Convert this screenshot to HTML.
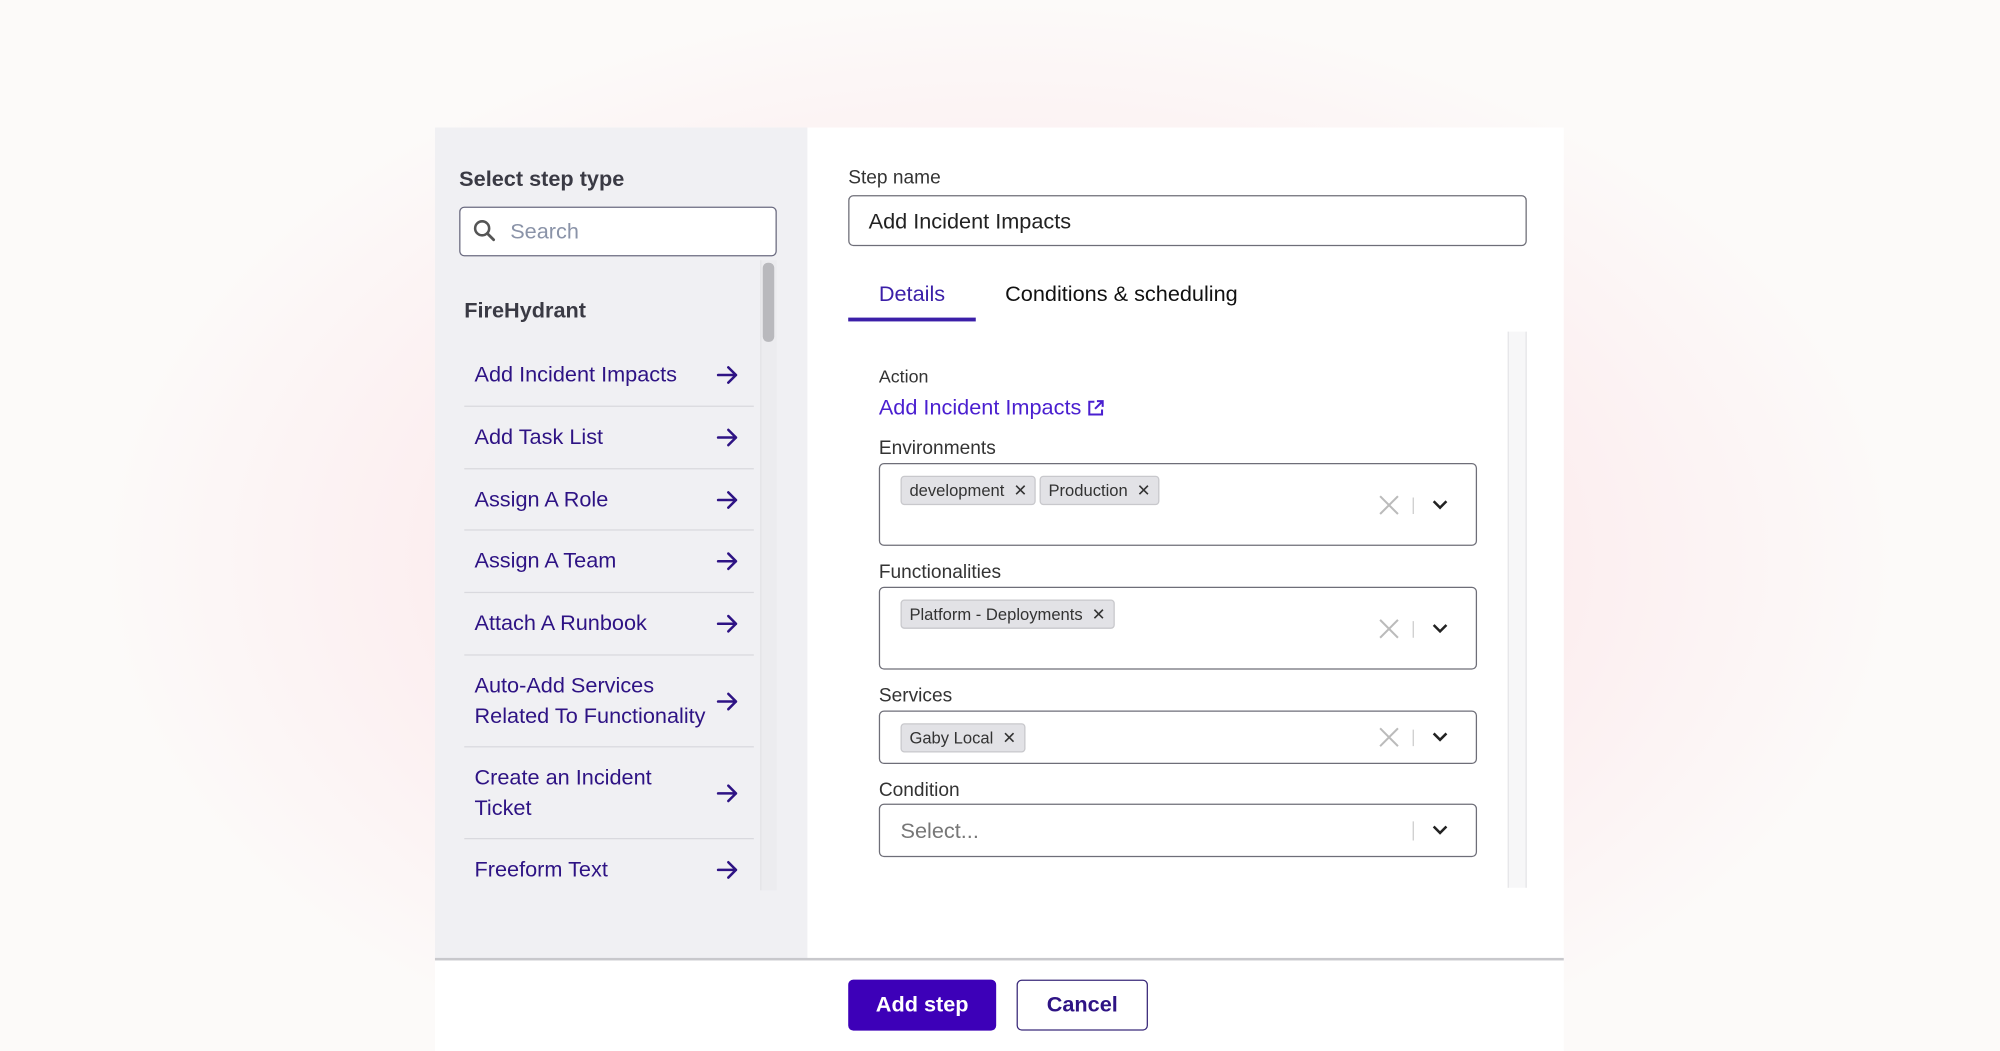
<!DOCTYPE html>
<html><head><meta charset="utf-8"><style>
*{box-sizing:border-box;margin:0;padding:0}
html,body{width:2000px;height:1050px;overflow:hidden;background:#fcfaf9;font-family:"Liberation Sans",sans-serif}
#bg{position:absolute;left:0;top:0;width:2000px;height:1050px;background:radial-gradient(ellipse 900px 560px at 1000px 560px,#fbe3e6 0%,#fcecee 55%,#fcfaf9 100%)}
#w{position:absolute;left:0;top:0;width:1568px;height:824px;transform:scale(1.27551);transform-origin:0 0}
.a{position:absolute}
.modal{left:341px;top:100px;width:885px;height:724px;background:#fff}
.left{left:341px;top:100px;width:292px;height:652px;background:#f0f0f3}
.h{font-weight:bold;font-size:17px;color:#3a3a44}
.item{left:364px;width:227px;border-bottom:1.5px solid #d9d9de;color:#2e1384;font-size:17px;line-height:24px}
.item span{position:absolute;left:8px}
.item svg{position:absolute;right:12px}
.lbl{font-size:15px;color:#333;left:689px}
.box{left:689px;width:469px;border:1.3px solid #6e6e78;border-radius:4px;background:#fff}
.chip{position:absolute;top:9px;height:23px;background:#e2e2e6;border:1px solid #c8c8cc;border-radius:3px;font-size:13px;color:#333;line-height:21px;padding:0 24px 0 6px}
.chip:after{content:"✕";position:absolute;right:6px;top:0;font-size:13px;color:#333}
.ctrl{position:absolute;right:0;width:80px}
</style></head><body><div id="bg"></div>
<div id="w">
<div class="a modal"></div>
<div class="a left"></div>
<div class="a h" style="left:360px;top:131px">Select step type</div>
<div class="a" style="left:360px;top:162px;width:249px;height:39px;border:1.3px solid #6b6b80;border-radius:4px;background:#fff"></div>
<svg class="a" style="left:370px;top:171px" width="20" height="20" viewBox="0 0 20 20"><circle cx="8" cy="8" r="5.5" fill="none" stroke="#555" stroke-width="2"/><path d="M12 12l5 5" stroke="#555" stroke-width="2.2" stroke-linecap="round"/></svg>
<div class="a" style="left:400px;top:172px;font-size:17px;color:#8a93a8">Search</div>
<div class="a" style="left:596px;top:204px;width:13px;height:494px;background:#ececef;border-left:1px solid #e3e3e6"></div>
<div class="a" style="left:598px;top:206px;width:9px;height:62px;background:#b9b9bd;border-radius:4px"></div>
<div class="a h" style="left:364px;top:234px">FireHydrant</div>
<svg width="0" height="0" style="position:absolute"><defs><g id="ar"><path d="M2 9h14M10 3l6 6-6 6" fill="none" stroke="#2e1384" stroke-width="2" stroke-linecap="round" stroke-linejoin="round"/></g></defs></svg>
<div class="a item" style="top:270px;height:49px"><span style="top:12px">Add Incident Impacts</span><svg style="top:15px" width="18" height="18"><use href="#ar"/></svg></div>
<div class="a item" style="top:319px;height:49px"><span style="top:12px">Add Task List</span><svg style="top:15px" width="18" height="18"><use href="#ar"/></svg></div>
<div class="a item" style="top:368px;height:48px"><span style="top:12px">Assign A Role</span><svg style="top:15px" width="18" height="18"><use href="#ar"/></svg></div>
<div class="a item" style="top:416px;height:49px"><span style="top:12px">Assign A Team</span><svg style="top:15px" width="18" height="18"><use href="#ar"/></svg></div>
<div class="a item" style="top:465px;height:49px"><span style="top:12px">Attach A Runbook</span><svg style="top:15px" width="18" height="18"><use href="#ar"/></svg></div>
<div class="a item" style="top:514px;height:72px"><span style="top:12px">Auto-Add Services<br>Related To Functionality</span><svg style="top:27px" width="18" height="18"><use href="#ar"/></svg></div>
<div class="a item" style="top:586px;height:72px"><span style="top:12px">Create an Incident<br>Ticket</span><svg style="top:27px" width="18" height="18"><use href="#ar"/></svg></div>
<div class="a item" style="top:658px;height:40px;border:none;overflow:hidden"><span style="top:12px">Freeform Text</span><svg style="top:15px" width="18" height="18"><use href="#ar"/></svg></div>

<div class="a lbl" style="left:665px;top:131px">Step name</div>
<div class="a" style="left:665px;top:153px;width:532px;height:40px;border:1.3px solid #6e6e78;border-radius:4px;font-size:17px;color:#222;padding:10px 15px">Add Incident Impacts</div>
<div class="a" style="left:689px;top:221px;font-size:17px;color:#3b1fa8">Details</div>
<div class="a" style="left:788px;top:221px;font-size:17px;color:#111">Conditions &amp; scheduling</div>
<div class="a" style="left:665px;top:249px;width:100px;height:2.5px;background:#3b1fa8"></div>
<div class="a" style="left:1182px;top:260px;width:15px;height:436px;background:#f7f7f8;border-left:1px solid #e6e6e9;border-right:1px solid #e6e6e9"></div>
<div class="a lbl" style="top:287px;font-size:14px">Action</div>
<div class="a" style="left:689px;top:310px;font-size:17px;color:#4a1fd0">Add Incident Impacts</div>
<svg class="a" style="left:852px;top:313px" width="14" height="14" viewBox="0 0 14 14"><path d="M6 2H2v10h10V8M8 1.5h4.5V6M12.5 1.5L6.5 7.5" fill="none" stroke="#4a1fd0" stroke-width="1.6"/></svg>
<div class="a lbl" style="top:343px">Environments</div>
<div class="a box" style="top:363px;height:65px"><div class="chip" style="left:16px">development</div><div class="chip" style="left:125px">Production</div><div class="ctrl" style="top:22px"></div></div>
<div class="a lbl" style="top:440px">Functionalities</div>
<div class="a box" style="top:460px;height:65px"><div class="chip" style="left:16px">Platform - Deployments</div></div>
<div class="a lbl" style="top:537px">Services</div>
<div class="a box" style="top:557px;height:42px"><div class="chip" style="left:16px">Gaby Local</div></div>
<div class="a lbl" style="top:611px">Condition</div>
<div class="a box" style="top:630px;height:42px"><span style="position:absolute;left:16px;top:11px;font-size:17px;color:#777">Select...</span></div>
<!-- controls -->
<svg class="a" style="left:1078px;top:387px" width="64" height="18"><path d="M4 2l14 14M18 2L4 16" stroke="#bbb" stroke-width="1.6"/><path d="M30 3v13" stroke="#ccc"/><path d="M46 6l5 5 5-5" fill="none" stroke="#222" stroke-width="2"/></svg>
<svg class="a" style="left:1078px;top:484px" width="64" height="18"><path d="M4 2l14 14M18 2L4 16" stroke="#bbb" stroke-width="1.6"/><path d="M30 3v13" stroke="#ccc"/><path d="M46 6l5 5 5-5" fill="none" stroke="#222" stroke-width="2"/></svg>
<svg class="a" style="left:1078px;top:569px" width="64" height="18"><path d="M4 2l14 14M18 2L4 16" stroke="#bbb" stroke-width="1.6"/><path d="M30 3v13" stroke="#ccc"/><path d="M46 6l5 5 5-5" fill="none" stroke="#222" stroke-width="2"/></svg>
<svg class="a" style="left:1078px;top:642px" width="64" height="18"><path d="M30 2v15" stroke="#ccc"/><path d="M46 6l5 5 5-5" fill="none" stroke="#222" stroke-width="2"/></svg>

<div class="a" style="left:341px;top:751px;width:885px;height:1.5px;background:#c8c8cc"></div>
<div class="a" style="left:665px;top:768px;width:116px;height:40px;background:#3d00b8;border-radius:4px;color:#fff;font-weight:bold;font-size:17px;text-align:center;line-height:40px">Add step</div>
<div class="a" style="left:797px;top:768px;width:103px;height:40px;border:1.5px solid #3a2a7a;border-radius:4px;color:#2e1384;font-weight:bold;font-size:17px;text-align:center;line-height:37px;background:#fff">Cancel</div>
</div></body></html>
